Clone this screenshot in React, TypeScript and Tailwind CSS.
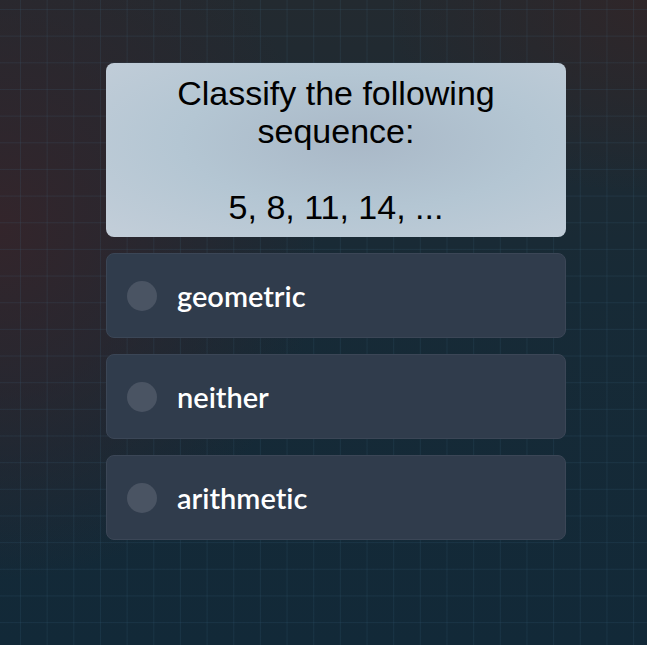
const options = ['geometric', 'neither', 'arithmetic'];

export default function App() {
  return (
    <div className="relative w-[647px] h-[645px] overflow-hidden bg-[#152a38] bg-[radial-gradient(ellipse_50%_55%_at_0%_35%,#33252b_0%,rgba(51,37,43,0.6)_45%,transparent_100%),radial-gradient(ellipse_40%_30%_at_100%_0%,#2f2629_0%,transparent_100%),linear-gradient(to_bottom,#232a30_0%,#172a36_45%,#122938_100%)]">
      <div className="absolute inset-0 bg-[linear-gradient(to_right,rgba(70,120,150,0.14)_1px,transparent_1px),linear-gradient(to_bottom,rgba(70,120,150,0.14)_1px,transparent_1px)] bg-[size:26.67px_26.67px] bg-[position:20px_9px]" />
      <div className="relative flex flex-col gap-4 w-[460px] ml-[106px] pt-[63px]">
        <div className="rounded-lg px-4 py-[11px] bg-[radial-gradient(ellipse_at_55%_45%,#a9b8c7_0%,#b4c6d3_50%,#c3ced9_100%)] text-black text-center text-[34px] leading-[38px] font-['Liberation_Sans',Arial,sans-serif] whitespace-pre-line">
          {'Classify the following\nsequence:\n\n5, 8, 11, 14, ...'}
        </div>
        {options.map((o) => (
          <div
            key={o}
            className="flex items-center gap-5 h-[85px] px-5 rounded-lg bg-[#303c4c] border border-[#3b4656]"
          >
            <div className="w-[30px] h-[30px] rounded-full bg-[#4a5463]" />
            <span className="text-white text-[29px] font-['Lato',sans-serif] font-semibold [font-variant-ligatures:none]">{o}</span>
          </div>
        ))}
      </div>
    </div>
  );
}
